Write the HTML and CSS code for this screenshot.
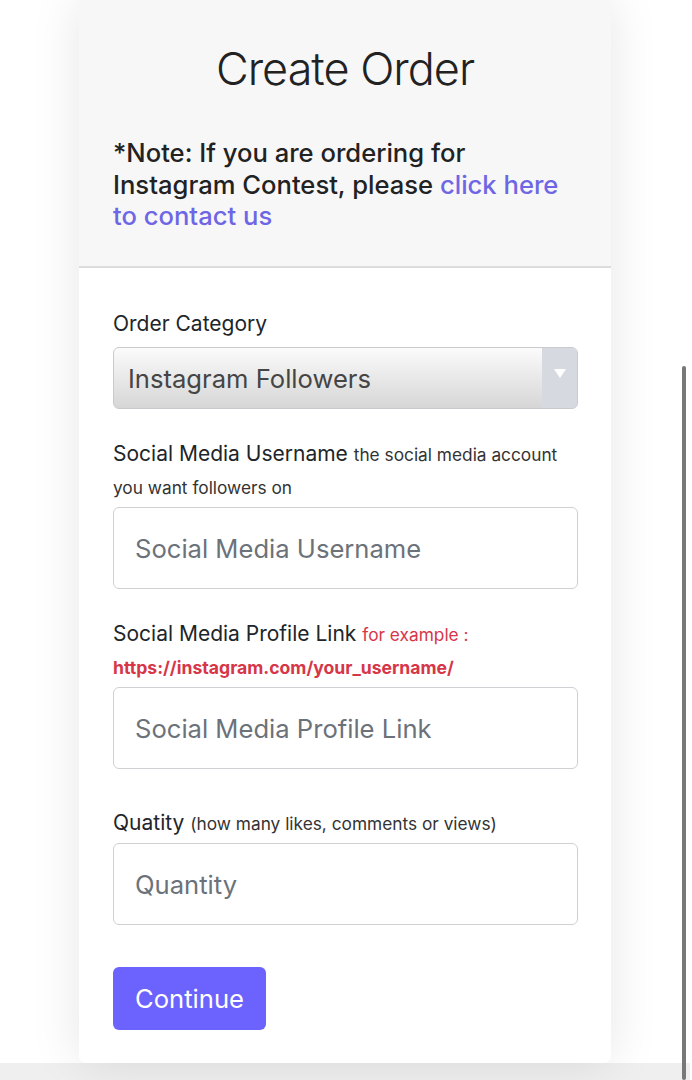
FILE: index.html
```html
<!DOCTYPE html>
<html lang="en">
<head>
<meta charset="utf-8">
<title>Create Order</title>
<link rel="stylesheet" href="styles.css">
</head>
<body>
<div class="page">
  <div class="card">
    <div class="card-header">
      <h1 class="title">Create Order</h1>
      <p class="note">*Note: If you are ordering for Instagram Contest, please <a href="#" class="link">click here to contact us</a></p>
    </div>
    <form class="card-body">
      <div class="group">
        <label class="label">Order Category</label>
        <div class="select">
          <span class="select-value">Instagram Followers</span>
          <span class="select-arrow"><svg width="12" height="10" viewBox="0 0 12 10"><path d="M0 0 L12 0 L6 9 Z" fill="#fff"/></svg></span>
        </div>
      </div>
      <div class="group">
        <label class="label">Social Media Username <small class="hint">the social media account you want followers on</small></label>
        <div class="input"><span class="placeholder">Social Media Username</span></div>
      </div>
      <div class="group">
        <label class="label">Social Media Profile Link <small class="hint red">for example :</small><br><strong class="example">https://instagram.com/your_username/</strong></label>
        <div class="input"><span class="placeholder">Social Media Profile Link</span></div>
      </div>
      <div class="group group-last">
        <label class="label">Quatity <small class="hint">(how many likes, comments or views)</small></label>
        <div class="input"><span class="placeholder">Quantity</span></div>
      </div>
      <button type="button" class="btn">Continue</button>
    </form>
  </div>
  <div class="band"></div>
  <div class="scrollbar"></div>
</div>
</body>
</html>
```

FILE: styles.css
```css
* { box-sizing: border-box; }
html, body { margin: 0; padding: 0; }
body {
  background: #ffffff;
  font-family: Inter, "Noto Sans", "Liberation Sans", sans-serif;
  color: #212529;
  overflow: hidden;
}
.page {
  width: 690px;
  height: 1080px;
  display: flex;
  flex-direction: column;
}
.card {
  width: 532px;
  margin: 0 auto;
  background: #fff;
  border-radius: 0 0 7px 7px;
  box-shadow: 0 0 50px rgba(0,0,0,0.10);
  position: relative;
  z-index: 1;
  flex: none;
}
.card-header {
  background: #f7f7f8;
  border-bottom: 2px solid #dcdcdc;
  padding: 40px 34px 28px;
  height: 268px;
}
.title {
  margin: 0;
  text-align: center;
  font-weight: 300;
  font-size: 45px;
  line-height: 58px;
  color: #222;
  letter-spacing: -1px;
}
.note {
  margin: 39px 0 0;
  font-size: 25.6px;
  line-height: 31.5px;
  font-weight: 500;
  color: #222;
}
.link {
  color: #6e66e4;
  text-decoration: none;
}
.card-body {
  padding: 39px 33px 33px 34px;
  display: flex;
  flex-direction: column;
}
.group {
  display: flex;
  flex-direction: column;
  margin-bottom: 28px;
}
.group-last { margin-top: 9px; margin-bottom: 42px; }
.label {
  font-size: 21px;
  line-height: 33px;
  margin-bottom: 4px;
  color: #212529;
}
.hint {
  font-size: 17.3px;
  line-height: 1;
  color: #333;
}
.red { color: #d63648; }
.example {
  font-size: 17.6px;
  line-height: 1;
  font-weight: 700;
  color: #d63648;
}
.select {
  height: 62px;
  margin-top: 3px;
  border: 1px solid #c9cacd;
  border-radius: 6px;
  background: linear-gradient(#fbfbfb, #d6d6d7);
  display: flex;
  align-items: center;
  overflow: hidden;
}
.select-value {
  flex: 1;
  padding-left: 14px;
  font-size: 25.6px;
  color: #454545;
}
.select-arrow {
  width: 35px;
  align-self: stretch;
  background: #d6d9df;
  display: flex;
  align-items: center;
  justify-content: center;
  padding-bottom: 8px;
}
.input {
  height: 82px;
  border: 1.5px solid #cfd0d4;
  border-radius: 6px;
  background: #fff;
  display: flex;
  align-items: center;
  padding-left: 21px;
}
.placeholder {
  font-size: 25.6px;
  color: #6c727a;
}
.btn {
  align-self: flex-start;
  width: 153px;
  height: 63px;
  border: none;
  border-radius: 6px;
  background: #6c63ff;
  color: #fff;
  font-family: inherit;
  font-size: 25.6px;
  font-weight: 400;
  padding: 0;
}
.band {
  flex: 1;
  background: #efefef;
}
.scrollbar {
  position: fixed;
  right: 6px;
  top: 366px;
  bottom: 0;
  width: 4px;
  border-radius: 2px;
  background: #787878;
  z-index: 2;
}
```
